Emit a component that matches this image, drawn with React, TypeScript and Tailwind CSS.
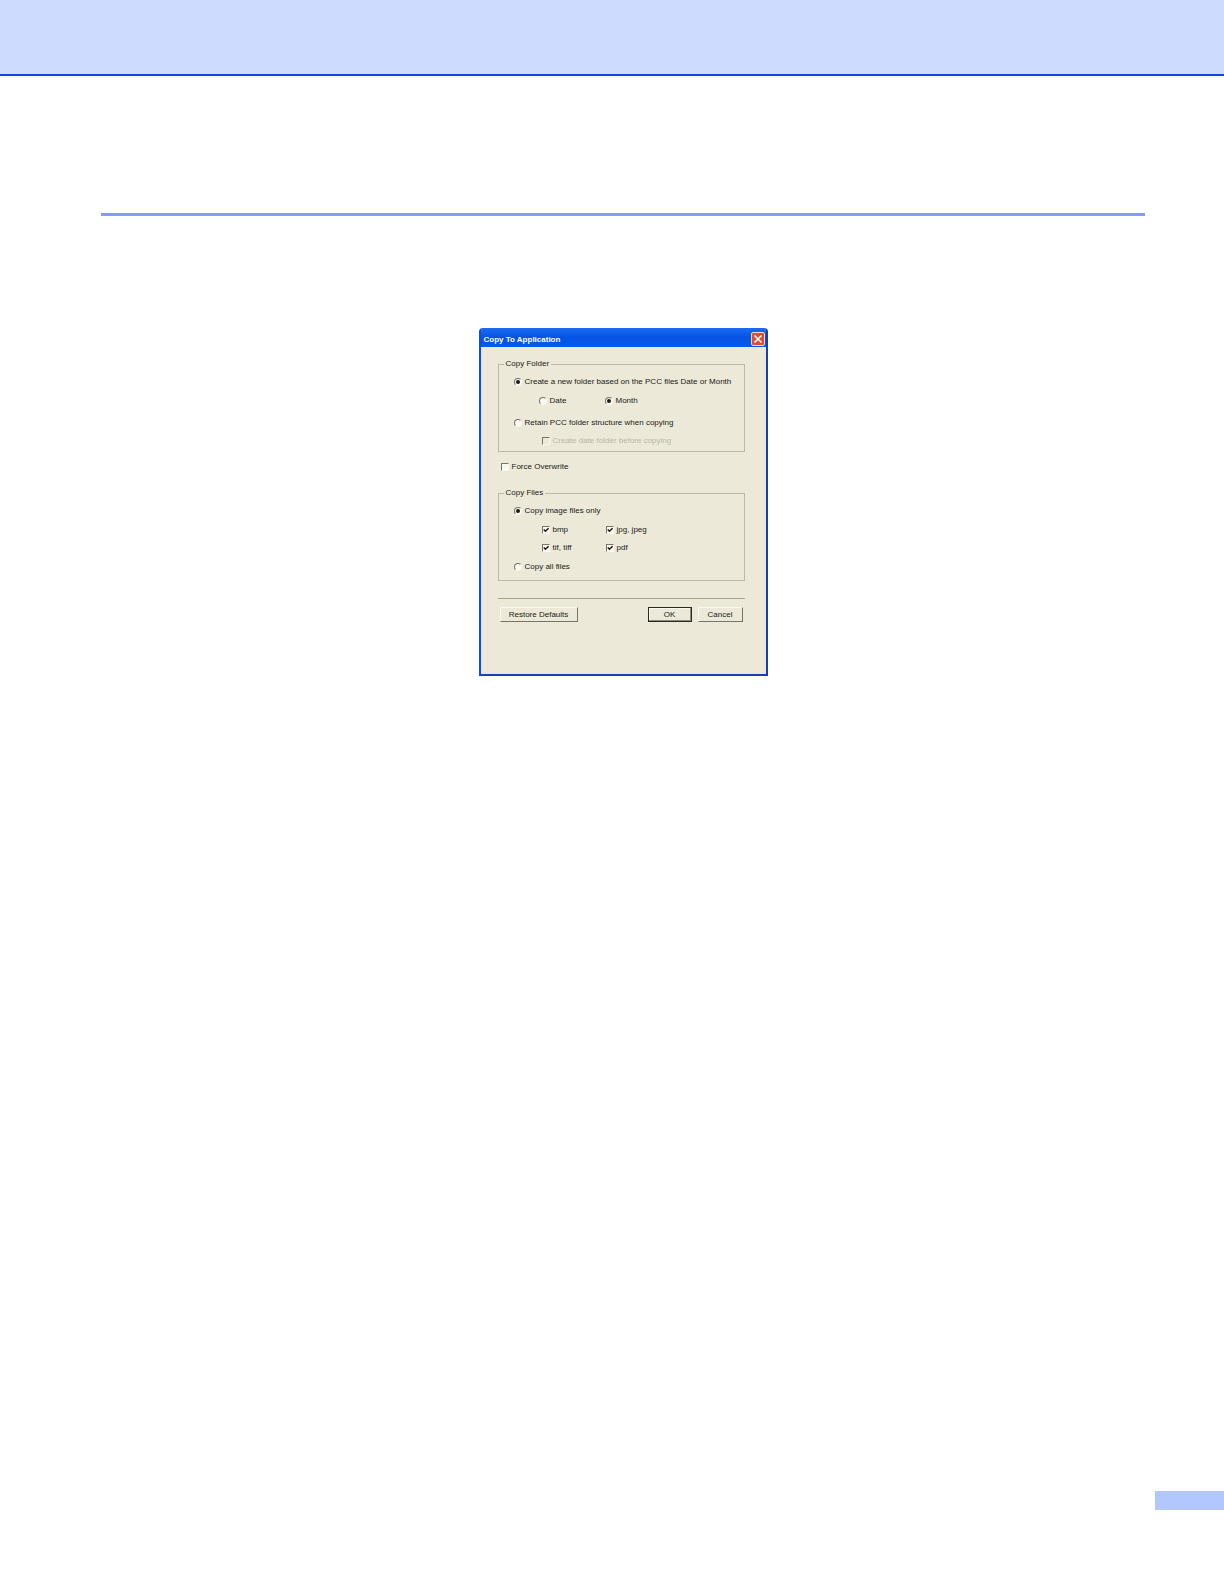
import { useState } from "react";
import type { ReactNode } from "react";

const imageTypes = ["bmp", "jpg, jpeg", "tif, tiff", "pdf"];

const sunken =
  "block size-2 shrink-0 appearance-none border border-t-[#77746a] border-l-[#77746a] border-r-[#f8f7f0] border-b-[#f8f7f0]";

const raised =
  "h-[15px] border border-t-[#f8f7f0] border-l-[#f8f7f0] border-r-[#77746a] border-b-[#77746a]";

type RadioProps = {
  name: string;
  checked: boolean;
  onChange: () => void;
  children: ReactNode;
};

function Radio({ name, checked, onChange, children }: RadioProps) {
  return (
    <label className="flex h-3 items-center gap-[3px] whitespace-nowrap">
      <span className="relative flex">
        <input
          type="radio"
          name={name}
          checked={checked}
          onChange={onChange}
          className={`${sunken} rounded-full bg-[#f8f7f0]`}
        />
        {checked && (
          <span className="pointer-events-none absolute top-[2px] left-[2px] size-1 rounded-full bg-[#1b1a16]" />
        )}
      </span>
      {children}
    </label>
  );
}

type CheckboxProps = {
  checked: boolean;
  onChange: () => void;
  disabled?: boolean;
  children: ReactNode;
};

function Checkbox({ checked, onChange, disabled, children }: CheckboxProps) {
  return (
    <label
      className={`flex h-3 items-center gap-[3px] whitespace-nowrap ${disabled ? "text-[#b9b6a6]" : ""}`}
    >
      <span className="relative flex">
        <input
          type="checkbox"
          checked={checked}
          onChange={onChange}
          disabled={disabled}
          className={`${sunken} ${disabled ? "bg-[#ece9d8]" : "bg-[#f8f7f0]"}`}
        />
        {checked && (
          <svg
            viewBox="0 0 8 8"
            className="pointer-events-none absolute inset-0 size-2"
            fill="none"
            stroke="#1b1a16"
            strokeWidth="1.5"
          >
            <path d="M1.8 3.6 3.4 5.3 6.6 2.2" />
          </svg>
        )}
      </span>
      {children}
    </label>
  );
}

function CopyDialog() {
  const [folderMode, setFolderMode] = useState<"new" | "retain">("new");
  const [period, setPeriod] = useState<"date" | "month">("month");
  const [dateFolder, setDateFolder] = useState(false);
  const [overwrite, setOverwrite] = useState(false);
  const [fileMode, setFileMode] = useState<"images" | "all">("images");
  const [types, setTypes] = useState(imageTypes);

  const toggleType = (type: string) =>
    setTypes(types.includes(type) ? types.filter((t) => t !== type) : [...types, type]);

  return (
    <section
      aria-labelledby="dialog-title"
      className="mx-auto w-[289px] overflow-hidden rounded-t-[4px] border-x-2 border-b-2 border-l-[#0b4fd6] border-r-[#1c3fae] border-b-[#1c3fae] bg-[#ece9d8] text-[8px] leading-3 text-[#1b1a16]"
    >
      <header className="flex h-[19px] items-center justify-between bg-linear-to-b from-[#1c6cf0] via-[#0453e4] to-[#0458f0] pr-px pl-[3px] text-white">
        <h1 id="dialog-title" className="pt-1 font-bold">
          Copy To Application
        </h1>
        <button
          type="button"
          aria-label="Close"
          className="mt-0.5 flex size-[14px] items-center justify-center rounded-[2px] border border-[#f0d8d8] bg-[#d8502f]"
        >
          <svg viewBox="0 0 10 10" className="size-[10px]" stroke="white" strokeWidth="1.6">
            <path d="M1.5 1.5 8.5 8.5M8.5 1.5 1.5 8.5" />
          </svg>
        </button>
      </header>

      <div className="border-x border-b border-[#dfe3f4] pt-[11px] pr-5 pb-[51px] pl-4">
        <fieldset className="min-w-0 border border-[#bcb9a8] px-[15px] pb-1">
          <legend className="-ml-2.5 px-0.5">Copy Folder</legend>
          <div className="pt-1.5">
            <Radio name="folder" checked={folderMode === "new"} onChange={() => setFolderMode("new")}>
              Create a new folder based on the PCC files Date or Month
            </Radio>
          </div>
          <div className="mt-[7px] grid grid-cols-[66px_1fr] pl-[25px]">
            <Radio name="period" checked={period === "date"} onChange={() => setPeriod("date")}>
              Date
            </Radio>
            <Radio name="period" checked={period === "month"} onChange={() => setPeriod("month")}>
              Month
            </Radio>
          </div>
          <div className="mt-2.5">
            <Radio name="folder" checked={folderMode === "retain"} onChange={() => setFolderMode("retain")}>
              Retain PCC folder structure when copying
            </Radio>
          </div>
          <div className="mt-1.5 pl-7">
            <Checkbox
              checked={dateFolder}
              onChange={() => setDateFolder(!dateFolder)}
              disabled={folderMode !== "retain"}
            >
              Create date folder before copying
            </Checkbox>
          </div>
        </fieldset>

        <div className="mt-[9px] pl-[3px]">
          <Checkbox checked={overwrite} onChange={() => setOverwrite(!overwrite)}>
            Force Overwrite
          </Checkbox>
        </div>

        <fieldset className="mt-[14px] min-w-0 border border-[#bcb9a8] px-[15px] pb-[7px]">
          <legend className="-ml-2.5 px-0.5">Copy Files</legend>
          <div className="pt-1.5">
            <Radio name="files" checked={fileMode === "images"} onChange={() => setFileMode("images")}>
              Copy image files only
            </Radio>
          </div>
          <div className="mt-[7px] grid grid-cols-[64px_1fr] gap-y-1.5 pl-7">
            {imageTypes.map((type) => (
              <Checkbox key={type} checked={types.includes(type)} onChange={() => toggleType(type)}>
                {type}
              </Checkbox>
            ))}
          </div>
          <div className="mt-[7px]">
            <Radio name="files" checked={fileMode === "all"} onChange={() => setFileMode("all")}>
              Copy all files
            </Radio>
          </div>
        </fieldset>

        <div className="mt-[17px] flex border-t border-[#a5a295] px-0.5 pt-2">
          <button type="button" className={`${raised} w-[78px]`}>
            Restore Defaults
          </button>
          <button
            type="button"
            className="mr-1.5 ml-auto h-[15px] w-11 border border-[#2b2a25] shadow-[inset_-1px_-1px_#8d8a7d,inset_1px_1px_#f8f7f0]"
          >
            OK
          </button>
          <button type="button" className={`${raised} w-[45px]`}>
            Cancel
          </button>
        </div>
      </div>
    </section>
  );
}

export default function App() {
  return (
    <div className="flex min-h-screen flex-col bg-white font-['Liberation_Sans',Arial,sans-serif]">
      <div className="h-[76px] border-b-2 border-[#0f47dc] bg-[#ccdbff]" />
      <main className="pt-[137px] pr-[79px] pl-[101px]">
        <hr className="mb-28 border-t-3 border-[#829ff2]" />
        <CopyDialog />
      </main>
      <div className="mt-auto mb-[74px] ml-auto h-[19px] w-[69px] bg-[#b3c7ff]" />
    </div>
  );
}
